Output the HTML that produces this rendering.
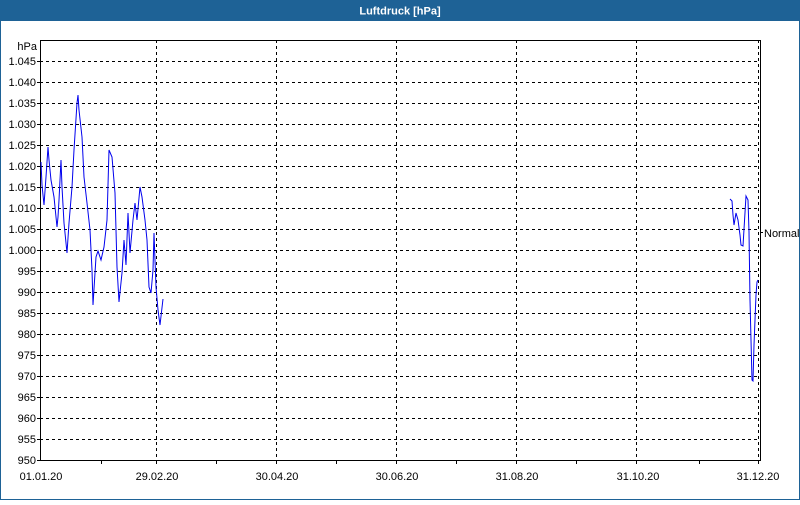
<!DOCTYPE html>
<html><head><meta charset="utf-8"><style>
html,body{margin:0;padding:0;background:#fff;}
body{width:800px;height:500px;overflow:hidden;}
</style></head><body>
<svg width="800" height="500" xmlns="http://www.w3.org/2000/svg" font-family="'Liberation Sans', Arial, sans-serif" font-size="11">
<rect x="0" y="0" width="800" height="500" fill="#fff"/>
<rect x="0.5" y="0.5" width="799" height="499" fill="none" stroke="#1e6296" stroke-width="1"/>
<rect x="0" y="0" width="800" height="21" fill="#1e6296"/>
<text x="400" y="14.5" text-anchor="middle" fill="#fff" font-weight="bold">Luftdruck [hPa]</text>
<g stroke="#000" stroke-width="1" stroke-dasharray="3,3" shape-rendering="crispEdges">
<line x1="40" y1="61.5" x2="760" y2="61.5"/><line x1="40" y1="82.5" x2="760" y2="82.5"/><line x1="40" y1="103.5" x2="760" y2="103.5"/><line x1="40" y1="124.5" x2="760" y2="124.5"/><line x1="40" y1="145.5" x2="760" y2="145.5"/><line x1="40" y1="166.5" x2="760" y2="166.5"/><line x1="40" y1="187.5" x2="760" y2="187.5"/><line x1="40" y1="208.5" x2="760" y2="208.5"/><line x1="40" y1="229.5" x2="760" y2="229.5"/><line x1="40" y1="250.5" x2="760" y2="250.5"/><line x1="40" y1="271.5" x2="760" y2="271.5"/><line x1="40" y1="292.5" x2="760" y2="292.5"/><line x1="40" y1="313.5" x2="760" y2="313.5"/><line x1="40" y1="334.5" x2="760" y2="334.5"/><line x1="40" y1="355.5" x2="760" y2="355.5"/><line x1="40" y1="376.5" x2="760" y2="376.5"/><line x1="40" y1="397.5" x2="760" y2="397.5"/><line x1="40" y1="418.5" x2="760" y2="418.5"/><line x1="40" y1="439.5" x2="760" y2="439.5"/>
<line x1="156.5" y1="40" x2="156.5" y2="460"/><line x1="276.5" y1="40" x2="276.5" y2="460"/><line x1="396.5" y1="40" x2="396.5" y2="460"/><line x1="516.5" y1="40" x2="516.5" y2="460"/><line x1="636.5" y1="40" x2="636.5" y2="460"/><line x1="758.5" y1="40" x2="758.5" y2="460"/>
</g>
<g stroke="#000" stroke-width="1" shape-rendering="crispEdges" fill="none">
<line x1="40" y1="40.5" x2="761" y2="40.5"/>
<line x1="40.5" y1="40" x2="40.5" y2="461"/>
<line x1="40" y1="460.5" x2="761" y2="460.5"/>
<line x1="760.5" y1="40" x2="760.5" y2="461"/>
<line x1="37" y1="61.5" x2="40" y2="61.5"/><line x1="37" y1="82.5" x2="40" y2="82.5"/><line x1="37" y1="103.5" x2="40" y2="103.5"/><line x1="37" y1="124.5" x2="40" y2="124.5"/><line x1="37" y1="145.5" x2="40" y2="145.5"/><line x1="37" y1="166.5" x2="40" y2="166.5"/><line x1="37" y1="187.5" x2="40" y2="187.5"/><line x1="37" y1="208.5" x2="40" y2="208.5"/><line x1="37" y1="229.5" x2="40" y2="229.5"/><line x1="37" y1="250.5" x2="40" y2="250.5"/><line x1="37" y1="271.5" x2="40" y2="271.5"/><line x1="37" y1="292.5" x2="40" y2="292.5"/><line x1="37" y1="313.5" x2="40" y2="313.5"/><line x1="37" y1="334.5" x2="40" y2="334.5"/><line x1="37" y1="355.5" x2="40" y2="355.5"/><line x1="37" y1="376.5" x2="40" y2="376.5"/><line x1="37" y1="397.5" x2="40" y2="397.5"/><line x1="37" y1="418.5" x2="40" y2="418.5"/><line x1="37" y1="439.5" x2="40" y2="439.5"/><line x1="37" y1="460.5" x2="40" y2="460.5"/>
<line x1="101.5" y1="460" x2="101.5" y2="464"/><line x1="156.5" y1="460" x2="156.5" y2="464"/><line x1="216.5" y1="460" x2="216.5" y2="464"/><line x1="276.5" y1="460" x2="276.5" y2="464"/><line x1="336.5" y1="460" x2="336.5" y2="464"/><line x1="396.5" y1="460" x2="396.5" y2="464"/><line x1="456.5" y1="460" x2="456.5" y2="464"/><line x1="516.5" y1="460" x2="516.5" y2="464"/><line x1="576.5" y1="460" x2="576.5" y2="464"/><line x1="636.5" y1="460" x2="636.5" y2="464"/><line x1="699.5" y1="460" x2="699.5" y2="464"/><line x1="758.5" y1="460" x2="758.5" y2="464"/>
<line x1="760" y1="232.5" x2="763" y2="232.5"/>
</g>
<g fill="#000" text-anchor="end">
<text x="37" y="50">hPa</text>
<text x="36" y="65">1.045</text><text x="36" y="86">1.040</text><text x="36" y="107">1.035</text><text x="36" y="128">1.030</text><text x="36" y="149">1.025</text><text x="36" y="170">1.020</text><text x="36" y="191">1.015</text><text x="36" y="212">1.010</text><text x="36" y="233">1.005</text><text x="36" y="254">1.000</text><text x="36" y="275">995</text><text x="36" y="296">990</text><text x="36" y="317">985</text><text x="36" y="338">980</text><text x="36" y="359">975</text><text x="36" y="380">970</text><text x="36" y="401">965</text><text x="36" y="422">960</text><text x="36" y="443">955</text><text x="36" y="464">950</text>
</g>
<g fill="#000" text-anchor="middle">
<text x="41" y="480">01.01.20</text><text x="157" y="480">29.02.20</text><text x="277" y="480">30.04.20</text><text x="397" y="480">30.06.20</text><text x="517" y="480">31.08.20</text><text x="638" y="480">31.10.20</text><text x="758" y="480">31.12.20</text>
</g>
<text x="764" y="237" fill="#000">Normal</text>
<g fill="none" stroke="#0000ee" stroke-width="1">
<polyline points="41,162 42,185 44,205 46,177 48,147 49,160 51,180 54,197 57,227 58,217 59,200 61,160 62,187 64,223 67,253 69,223 72,187 74,150 77,103 78,95 79,110 82,137 84,177 87,203 90,230 92,270 93,305 96,257 98,251 101,260 104,247 107,220 109,150 112,157 115,193 117,267 119,302 122,273 124,240 126,265 128,213 130,253 133,220 135,203 137,220 140,187 142,197 145,220 147,240 149,287 151,293 153,270 154,233 156,287 158,310 160,325 163,299"/>
<polyline points="730,199 732,201 733,215 734,225 736,213 738,220 740,235 741,245 743,246 746,196 748,200 749,232 750,300 751,340 752,380 753,381 754,345 756,295 757,282 758,280"/>
</g>
</svg>
</body></html>
